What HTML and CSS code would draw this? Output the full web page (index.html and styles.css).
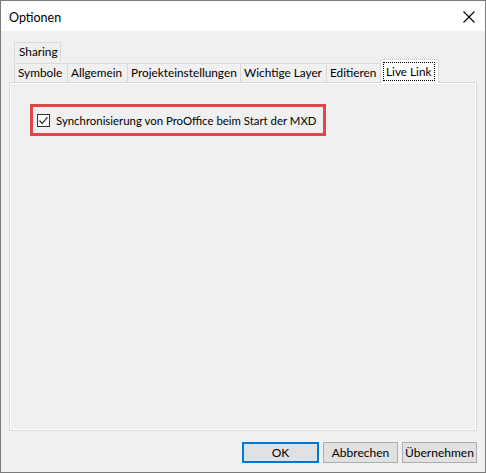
FILE: index.html
```html
<!DOCTYPE html>
<html>
<head>
<meta charset="utf-8">
<link rel="stylesheet" href="styles.css">
</head>
<body>
<div class="window">
  <div class="titlebar">
    <span class="title">Optionen</span>
    <svg class="close" width="12" height="12" viewBox="0 0 12 12"><path d="M0.5 0.5 L11.5 11.5 M11.5 0.5 L0.5 11.5" stroke="#000" stroke-width="1.1" fill="none"/></svg>
  </div>
  <div class="client">
    <div class="tabs">
      <div class="tabrow row1">
        <div class="tab t-sharing">Sharing</div>
      </div>
      <div class="tabrow row2">
        <div class="tab t1">Symbole</div>
        <div class="tab t2">Allgemein</div>
        <div class="tab t3">Projekteinstellungen</div>
        <div class="tab t4">Wichtige Layer</div>
        <div class="tab t5">Editieren</div>
        <div class="tab active"><span class="focus">Live Link</span></div>
      </div>
    </div>
    <div class="panel">
      <div class="highlight">
        <label class="check">
          <span class="box"><svg width="11" height="11" viewBox="0 0 11 11"><path d="M1.5 5.5 L4.2 8.3 L9.5 2.2" stroke="#222" stroke-width="1.2" fill="none"/></svg></span>
          <span class="label">Synchronisierung von ProOffice beim Start der MXD</span>
        </label>
      </div>
    </div>
    <div class="buttons">
      <button class="btn default">OK</button>
      <button class="btn">Abbrechen</button>
      <button class="btn">Übernehmen</button>
    </div>
  </div>
</div>
</body>
</html>
```

FILE: styles.css
```css
html, body {
  margin: 0;
  padding: 0;
}
body {
  font-family: "Lato", "Noto Sans", sans-serif;
  font-size: 12px;
  color: #000;
  background: #2a6f7a;
}
.window {
  width: 486px;
  height: 473px;
  box-sizing: border-box;
  border: 1px solid #7a7a7a;
  background: #f0f0f0;
  display: flex;
  flex-direction: column;
}
.titlebar {
  height: 30px;
  background: #fff;
  display: flex;
  align-items: center;
  justify-content: space-between;
  padding: 0 9px 0 8px;
  flex: none;
}
.title {
  margin-top: 2px;
  font-size: 12.5px;
}
.close {
  margin-right: 1px;
  margin-top: 1px;
}
.client {
  flex: 1;
  display: flex;
  flex-direction: column;
  padding: 11px 8px 9px 8px;
}
.tabs {
  margin-left: 5px;
  display: flex;
  flex-direction: column;
  position: relative;
  z-index: 1;
  font-size: 11.8px;
}
.tabrow {
  display: flex;
  align-items: flex-end;
}
.row2 {
  height: 23px;
  margin-top: -3px;
}
.tab {
  height: 19px;
  box-sizing: border-box;
  padding: 0 0 0 3px;
  line-height: 18px;
  border: 1px solid #d9d9d9;
  border-bottom: none;
  border-right: none;
  background: #f0f0f0;
  white-space: nowrap;
}
.t-sharing {
  height: 20px;
  width: 47px;
  border-right: 1px solid #d9d9d9;
  padding-left: 4px;
}
.t1 { width: 53px; }
.t2 { width: 60px; }
.t3 { width: 113px; }
.t4 { width: 86px; }
.t5 { width: 54px; }
.tab.active {
  width: 59px;
  height: 24px;
  background: #fff;
  border: 1px solid #d9d9d9;
  border-bottom: none;
  margin-bottom: -1px;
  padding: 2px 2px 0 2px;
  line-height: 16px;
}
.focus {
  display: inline-block;
  border: 1px dotted #000;
  padding: 0 2px;
  line-height: 17px;
}
.panel {
  height: 349px;
  box-sizing: border-box;
  border: 1px solid #d9d9d9;
  box-shadow: inset 1px 1px 0 #fff, inset -1px -1px 0 #fff;
  padding: 21px 0 0 20px;
}
.highlight {
  width: 296px;
  height: 32px;
  box-sizing: border-box;
  border: 3px solid #e0474c;
  display: flex;
  align-items: center;
  padding-left: 4px;
}
.check {
  display: flex;
  align-items: center;
  gap: 6px;
  white-space: nowrap;
}
.label {
  font-size: 11.4px;
}
.box {
  width: 13px;
  height: 13px;
  box-sizing: border-box;
  border: 1px solid #333;
  background: #fff;
  display: flex;
  align-items: center;
  justify-content: center;
}
.buttons {
  display: flex;
  justify-content: flex-end;
  gap: 4px;
  margin-top: 11px;
}
.btn {
  width: 75px;
  height: 21px;
  font-family: inherit;
  font-size: 12px;
  background: #e1e1e1;
  border: 1px solid #adadad;
  padding: 0;
  color: #000;
}
.btn.default {
  border: 2px solid #0078d7;
  width: 77px;
}
```
